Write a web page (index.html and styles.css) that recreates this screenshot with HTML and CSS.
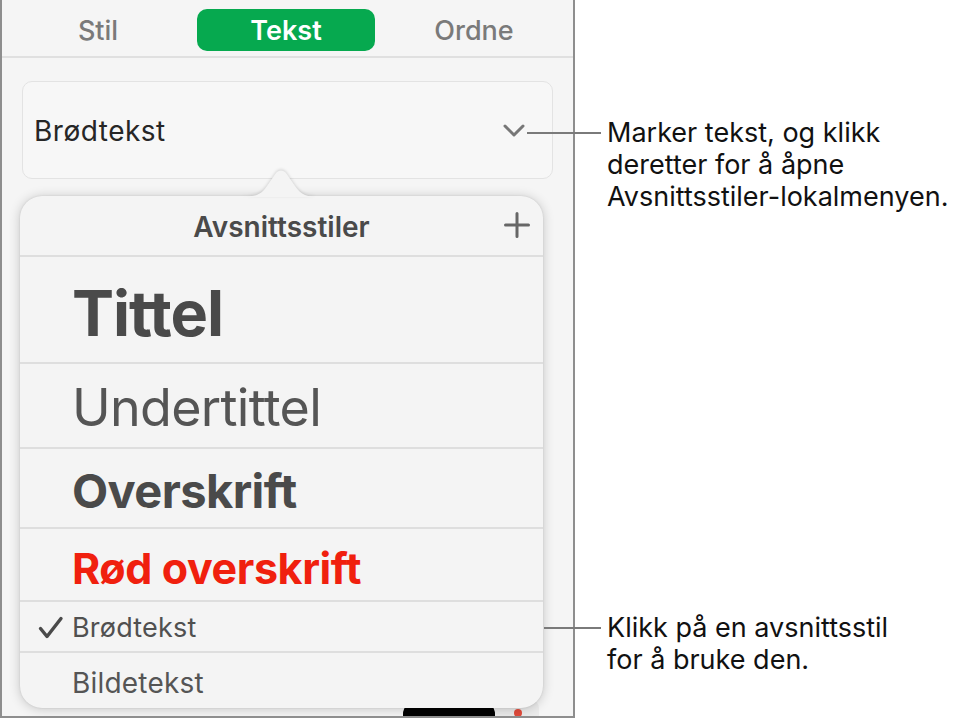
FILE: index.html
```html
<!DOCTYPE html>
<html lang="no">
<head>
<meta charset="utf-8">
<title>Avsnittsstiler</title>
<link rel="stylesheet" href="styles.css">
</head>
<body>
<div class="page">
  <div class="inspector">
    <div class="tabs">
      <div class="tab">Stil</div>
      <div class="tab tab-active">Tekst</div>
      <div class="tab">Ordne</div>
    </div>
    <div class="style-select">
      <span class="style-name">Brødtekst</span>
      <svg class="chevron" width="22" height="16" viewBox="0 0 22 16"><path d="M2 3 L11 12 L20 3" fill="none" stroke="#777" stroke-width="3" stroke-linecap="round" stroke-linejoin="round"/></svg>
    </div>
    <div class="under-row">
      <div class="black-bar"></div>
      <div class="swatch"><span class="swatch-dot"></span></div>
    </div>

    <div class="popover">
      <svg class="notch" width="80" height="30" viewBox="0 0 80 30"><path d="M0 29 C14 29 20 27 26 18 L35 5 C37.5 1.5 42.5 1.5 45 5 L54 18 C60 27 66 29 80 29 Z" fill="#f4f4f4"/></svg>
      <div class="pop-header">
        <span class="pop-title">Avsnittsstiler</span>
        <svg class="plus" width="26" height="26" viewBox="0 0 26 26"><path d="M13 1.5 V24.5 M1.5 13 H24.5" stroke="#666" stroke-width="3" stroke-linecap="round"/></svg>
      </div>
      <div class="row row-tittel"><span class="s-tittel">Tittel</span></div>
      <div class="row row-under"><span class="s-under">Undertittel</span></div>
      <div class="row row-over"><span class="s-over">Overskrift</span></div>
      <div class="row row-red"><span class="s-red">Rød overskrift</span></div>
      <div class="row row-body">
        <svg class="check" width="26" height="24" viewBox="0 0 26 24"><path d="M2.5 12.5 L9 20.5 L23 2.5" fill="none" stroke="#4a4a4a" stroke-width="3.4" stroke-linecap="round" stroke-linejoin="round"/></svg>
        <span class="s-body">Brødtekst</span>
      </div>
      <div class="row row-caption"><span class="s-caption">Bildetekst</span></div>
    </div>
  </div>

  <div class="notes">
    <div class="note note-top">Marker tekst, og klikk<br>deretter for å åpne<br>Avsnittsstiler-lokalmenyen.</div>
    <div class="note note-bottom">Klikk på en avsnittsstil<br>for å bruke den.</div>
  </div>
</div>
</body>
</html>
```
FILE: styles.css
```css
html, body {
  margin: 0;
  padding: 0;
  background: #ffffff;
}
body {
  width: 960px;
  height: 718px;
  overflow: hidden;
  font-family: "Inter", "Liberation Sans", sans-serif;
}
.page {
  display: flex;
  width: 960px;
  height: 718px;
}
.inspector {
  position: relative;
  box-sizing: border-box;
  width: 575px;
  height: 718px;
  background: #f5f5f5;
  border-left: 2px solid #8e8e8e;
  border-right: 2px solid #8e8e8e;
  border-bottom: 2px solid #8e8e8e;
  display: flex;
  flex-direction: column;
  overflow: hidden;
}
.tabs {
  height: 58px;
  border-bottom: 2px solid #e0e0e0;
  display: grid;
  grid-template-columns: 178px 178px 178px;
  column-gap: 10px;
  padding: 9px 0 0 7px;
  box-sizing: border-box;
}
.tab {
  height: 42px;
  border-radius: 10px;
  display: flex;
  align-items: center;
  justify-content: center;
  font-size: 27px;
  font-weight: 500;
  color: #7a7a7a;
}
.tab-active {
  background: #06a94f;
  color: #ffffff;
  font-weight: 600;
}
.style-select {
  margin: 23px 20px 0 20px;
  height: 98px;
  box-sizing: border-box;
  border: 1px solid #e3e3e3;
  border-radius: 10px;
  background: #f7f7f7;
  display: flex;
  align-items: center;
  justify-content: space-between;
  padding: 0 27px 0 11px;
}
.style-name {
  font-size: 28px;
  color: #262626;
  letter-spacing: 0.5px;
  margin-top: 2px;
}
.chevron {
  display: block;
  margin-top: 2px;
}
.under-row {
  margin-top: auto;
  display: flex;
  align-items: flex-end;
  padding-left: 401px;
  height: 16px;
}
.black-bar {
  width: 92px;
  height: 14px;
  background: #000;
  border-radius: 12px 12px 0 0;
}
.swatch {
  width: 44px;
  height: 16px;
  background: #ebebeb;
  border-radius: 8px 8px 0 0;
  position: relative;
}
.swatch-dot {
  position: absolute;
  left: 19px;
  top: 9px;
  width: 8px;
  height: 8px;
  border-radius: 50%;
  background: #e24b3b;
}
.popover {
  position: absolute;
  left: 18px;
  top: 196px;
  width: 523px;
  height: 512px;
  background: #f4f4f4;
  border-radius: 22px;
  box-shadow: 0 1px 12px rgba(0,0,0,0.2), 0 0 2px rgba(0,0,0,0.12);
  display: flex;
  flex-direction: column;
}
.notch {
  position: absolute;
  left: 221px;
  top: -28px;
  filter: drop-shadow(0 -1px 1.5px rgba(0,0,0,0.15));
}
.pop-header {
  position: relative;
  height: 59px;
  border-bottom: 2px solid #dedede;
  display: flex;
  align-items: center;
  justify-content: center;
}
.pop-title {
  font-size: 28px;
  font-weight: 600;
  color: #4a4a4a;
  margin-top: 2px;
}
.plus {
  position: absolute;
  right: 13px;
  top: 16px;
}
.row {
  display: flex;
  align-items: center;
  padding-left: 52px;
  border-bottom: 2px solid #dedede;
  box-sizing: border-box;
  position: relative;
}
.row-tittel { height: 107px; }
.row-under { height: 85px; }
.row-over { height: 80px; }
.row-red { height: 73px; }
.row-body { height: 51px; }
.row-caption { height: 55px; border-bottom: none; }
.s-tittel {
  font-size: 63px;
  font-weight: 700;
  color: #4a4a4a;
  letter-spacing: -1px;
  margin-top: 6px;
}
.s-under {
  font-size: 52px;
  font-weight: 400;
  color: #555555;
  letter-spacing: -0.7px;
  margin-top: 4px;
}
.s-over {
  font-size: 47px;
  font-weight: 700;
  color: #4a4a4a;
  letter-spacing: -0.6px;
  margin-top: 4px;
}
.s-red {
  font-size: 43px;
  font-weight: 700;
  color: #f0200e;
  letter-spacing: -0.4px;
  margin-top: 6px;
}
.s-body {
  font-size: 27px;
  font-weight: 400;
  color: #505050;
  letter-spacing: 0.2px;
  margin-top: 2px;
}
.s-caption {
  font-size: 28px;
  font-weight: 400;
  color: #555555;
  letter-spacing: 0.2px;
  margin-top: 4px;
}
.check {
  position: absolute;
  left: 18px;
  top: 14px;
}
.notes {
  flex: 1;
  position: relative;
  padding-left: 32px;
  display: flex;
  flex-direction: column;
}
.note {
  position: relative;
  font-size: 27px;
  line-height: 32px;
  color: #111111;
}
.note-top {
  margin-top: 117px;
}
.note-bottom {
  margin-top: 399px;
}
.note::before {
  content: "";
  position: absolute;
  top: 15px;
  height: 2px;
  background: #7a7a7a;
}
.note-top::before {
  left: -80px;
  width: 74px;
}
.note-bottom::before {
  left: -63px;
  width: 57px;
}
```
